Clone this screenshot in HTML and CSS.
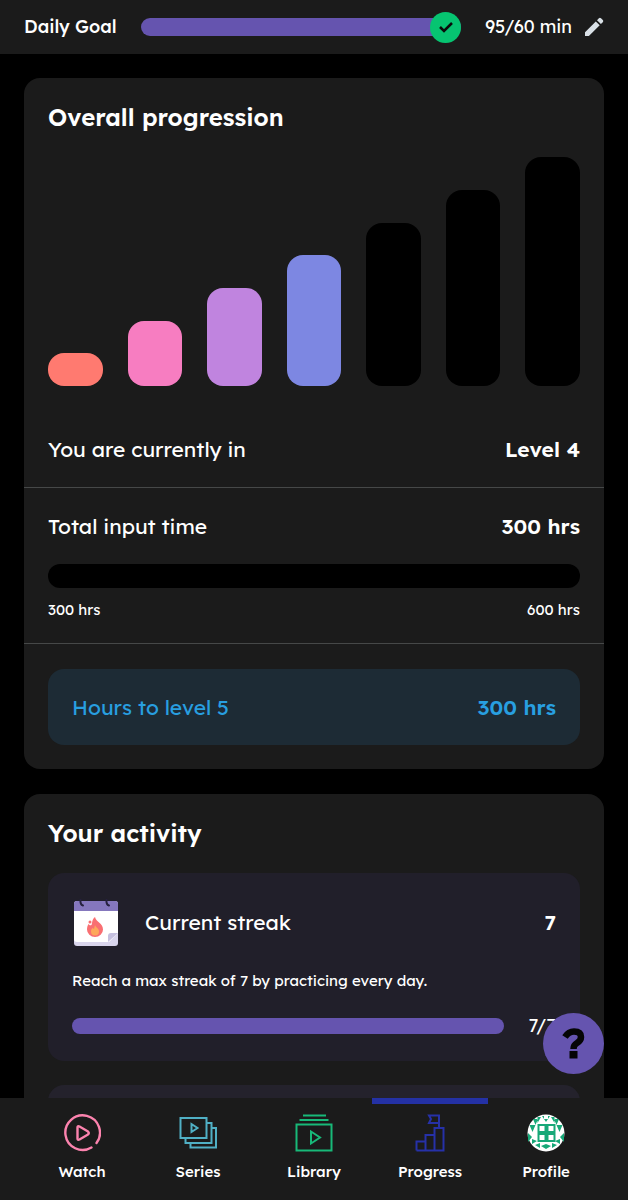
FILE: index.html
```html
<!DOCTYPE html>
<html lang="en">
<head>
    <meta charset="UTF-8">
    <meta name="viewport" content="width=device-width, initial-scale=1.0">
    <title>Progress</title>
    <link rel="stylesheet" href="styles.css">
</head>
<body>

<header class="daily-goal">
    <span class="goal-label" id="goal-label">Daily Goal</span>
    <div class="goal-track" role="progressbar" aria-labelledby="goal-label" aria-valuenow="95" aria-valuemax="60">
        <span class="goal-check">
            <svg width="16" height="12" viewBox="0 0 16 12" fill="none" stroke="#0b0b0b" stroke-width="2.500"><path d="M2 6l4 4L14 2"/></svg>
        </span>
    </div>
    <span class="goal-time">95/60 min</span>
    <button class="edit-goal" aria-label="Edit daily goal">
        <svg width="20" height="20" viewBox="0 0 20 20" fill="#d9e0e6"><path d="M1 15.200L11.800 4.400l3.900 3.900L4.900 19H1zM13 3.200l1.900-1.900a1.500 1.500 0 0 1 2.100 0l1.800 1.800a1.500 1.500 0 0 1 0 2.100L16.900 7.100z"/></svg>
    </button>
</header>

<main class="content">
    <section class="card">
        <h2>Overall progression</h2>
        <div class="levels">
            <div class="level level-1"></div>
            <div class="level level-2"></div>
            <div class="level level-3"></div>
            <div class="level level-4"></div>
            <div class="level level-5"></div>
            <div class="level level-6"></div>
            <div class="level level-7"></div>
        </div>
        <div class="row current-level">
            <span>You are currently in</span>
            <strong>Level 4</strong>
        </div>
        <div class="input-time">
            <div class="row">
                <span>Total input time</span>
                <strong>300 hrs</strong>
            </div>
            <div class="input-track"></div>
            <div class="range">
                <span>300 hrs</span>
                <span>600 hrs</span>
            </div>
        </div>
        <div class="row next-level">
            <span>Hours to level 5</span>
            <strong>300 hrs</strong>
        </div>
    </section>

    <section class="card">
        <h2>Your activity</h2>
        <article class="activity">
            <div class="activity-head">
                <svg width="48" height="50" viewBox="0 0 48 50">
                    <rect x="2" y="4" width="44" height="45" rx="3" fill="#d9d5ec"/>
                    <path d="M2 7h44v29l-9 9H5q-3 0-3-3z" fill="#fff"/>
                    <path d="M2 14V7q0-3 3-3h38q3 0 3 3v7z" fill="#8577bd"/>
                    <path d="M36 45v-6q0-3 3-3h7z" fill="#c5c0df"/>
                    <path d="M11 8.500q-3-1-2.500-5.500M37 8.500q-3-1-2.500-5.500" fill="none" stroke="#27213f" stroke-width="2" stroke-linecap="round"/>
                    <path d="M23 20c1 5 8 6 8 12.500a8 7.500 0 0 1-16 0c0-2 .5-4 1.500-5.500 1 1.500 2 1.500 3 1 1-2 0-5 3.500-8z" fill="#f96f72"/>
                    <circle cx="18" cy="25" r="1.500" fill="#f96f72"/>
                    <path d="M23 28c1 3 4 3 4 6.500a4 4 0 0 1-8 0c0-1.500.5-2.500 1.500-3.500l1.500 1z" fill="#fda85b"/>
                </svg>
                <h3>Current streak</h3>
                <strong>7</strong>
            </div>
            <p>Reach a max streak of 7 by practicing every day.</p>
            <div class="streak">
                <div class="streak-track"></div>
                <span>7/7</span>
            </div>
        </article>
        <article class="activity activity-next"></article>
    </section>
</main>

<button class="help" aria-label="Help">
    <svg width="24" height="32" viewBox="0 0 24 32"><path d="M3 9Q6.500 3.500 12 3.500q7 0 7 5.500 0 3.500-4 6-3.500 2-3.500 6" fill="none" stroke="#050505" stroke-width="6.500"/><path d="M7.500 23h8v7.500h-8z" fill="#050505"/></svg>
</button>

<nav class="tabs">
    <a href="#watch" class="tab">
        <svg width="38" height="38" viewBox="0 0 38 38" fill="none" stroke="#fc83ae" stroke-width="2.400" stroke-linecap="round" stroke-linejoin="round"><path d="M28.500 33.500A17.300 17.300 0 1 1 33.500 29"/><path d="M14.500 13.500v11q0 2 2 1l8.500-5q1.500-1.500 0-3l-8.500-5q-2-1-2 1z"/></svg>
        <span>Watch</span>
    </a>
    <a href="#series" class="tab">
        <svg width="38" height="38" viewBox="0 0 38 38" fill="none" stroke="#50b0c5" stroke-width="2"><path d="M1.500 4h26v20h-26zM27.500 9h5v20h-26v-5M32.500 14h4.500v19.500H11.500v-4.500M12.500 10v8l6-4z"/></svg>
        <span>Series</span>
    </a>
    <a href="#library" class="tab">
        <svg width="38" height="38" viewBox="0 0 38 38" fill="none" stroke="#18b979" stroke-width="2"><path d="M8 1.500h23M4.500 6h29M1.500 10.500h35v26h-35zM16 17.500v12l9-6z"/></svg>
        <span>Library</span>
    </a>
    <a href="#progress" class="tab active" aria-current="page">
        <svg width="38" height="38" viewBox="0 0 38 38" fill="none" stroke="#2631a8" stroke-width="2"><path d="M5.500 36.500V27.500h9v9M14.500 27.500V21h9v15.500M23.500 21v-7h9v22.500h-27M28 14V1.500H18L20 5l-2 4h10"/></svg>
        <span>Progress</span>
    </a>
    <a href="#profile" class="tab">
        <svg width="38" height="38" viewBox="0 0 38 38">
            <circle cx="19" cy="19" r="18.500" fill="#fff"/>
            <g fill="#17a878">
                <path d="M10.500 10h18v18h-18z"/>
                <path d="M10.500 3v6l3.500-6zM15 2l4 6 4-6h-2v3h-4V2zM24 3l3.500 6V3zM6 5h5l-2.500 6zM27 5h5l-2.500 6z"/>
                <path d="M2.500 11h6L5.500 18zM29.500 11h6l-3 7zM1 19l4 4-4 5zM37 19l-4 4 4 5zM5 25l5 2-5 3zM33 25l-5 2 5 3z"/>
                <path d="M8 31l5-2v5zM14 32l5-2v5zM24 32l-5-2v5zM30 31l-5-2v5z"/>
            </g>
            <path d="M12.500 12h5v5h-5zM21.500 12h5v5h-5zM12.500 21h5v5h-5zM21.500 21h5v5h-5z" fill="#fff"/>
        </svg>
        <span>Profile</span>
    </a>
</nav>

</body>
</html>
```
FILE: styles.css
```css
* {
    box-sizing: border-box;
}

body {
    display: flex;
    flex-direction: column;
    height: 100vh;
    margin: 0;
    background-color: #000;
    color: #fff;
    font-family: Lexend, Inter, sans-serif;
    font-size: 21px;
    line-height: 28px;
}

h2, h3, p {
    margin: 0;
}

strong {
    font-weight: 600;
}

button {
    padding: 0;
    border: none;
    background: none;
    cursor: pointer;
}

.daily-goal {
    display: flex;
    align-items: center;
    flex-shrink: 0;
    padding: 13px 24px;
    background-color: #1b1b1b;
    font-size: 18px;
}

.goal-label {
    font-weight: 500;
}

.goal-track {
    display: flex;
    align-items: center;
    justify-content: flex-end;
    flex: 1;
    height: 18px;
    margin: 0 24px;
    border-radius: 9px;
    background-color: #6554af;
}

.goal-check {
    display: flex;
    align-items: center;
    justify-content: center;
    width: 31px;
    height: 31px;
    border-radius: 50%;
    background-color: #06c471;
}

.edit-goal {
    display: flex;
    margin-left: 12px;
}

.content {
    flex: 1;
    min-height: 0;
    padding: 24px;
    overflow-y: auto;
    scrollbar-width: none;
}

.card {
    padding: 24px;
    margin-bottom: 25px;
    border-radius: 16px;
    background-color: #1b1b1b;
}

.card h2 {
    font-size: 24px;
    font-weight: 600;
    line-height: 31px;
}

.levels {
    display: grid;
    grid-template-columns: repeat(7, 1fr);
    align-items: end;
    gap: 25px;
    margin-top: 24px;
}

.level {
    border-radius: 16px;
    background-color: #000;
}

.level-1 { height: 33px; background-color: #ff7a70; }
.level-2 { height: 65px; background-color: #f77dc1; }
.level-3 { height: 98px; background-color: #c084df; }
.level-4 { height: 131px; background-color: #7d87e2; }
.level-5 { height: 163px; }
.level-6 { height: 196px; }
.level-7 { height: 229px; }

.row {
    display: flex;
    align-items: center;
    justify-content: space-between;
}

.current-level {
    margin: 25px -24px 0;
    padding: 24px;
    border-bottom: 1px solid #464848;
}

.input-time {
    margin: 0 -24px 25px;
    padding: 24px;
    border-bottom: 1px solid #464848;
}

.input-track {
    height: 24px;
    margin: 24px 0 12px;
    border-radius: 12px;
    background-color: #000;
}

.range {
    display: flex;
    justify-content: space-between;
    font-size: 15px;
    line-height: 19px;
}

.next-level {
    padding: 24px;
    border-radius: 16px;
    background-color: #1d2b35;
    color: #289fe0;
}

.activity {
    margin-top: 24px;
    padding: 24px;
    border-radius: 16px;
    background-color: #211f2a;
}

.activity-head {
    display: flex;
    align-items: center;
}

.activity-head h3 {
    flex: 1;
    margin-left: 25px;
    font-size: 21px;
    font-weight: 400;
}

.activity p {
    margin: 24px 0;
    font-size: 15px;
    line-height: 19px;
}

.streak {
    display: flex;
    align-items: center;
    font-size: 18px;
    line-height: 23px;
}

.streak-track {
    flex: 1;
    height: 16px;
    margin-right: 25px;
    border-radius: 8px;
    background-color: #6554af;
}

.activity-next {
    height: 188px;
    background-color: #24222c;
}

.help {
    position: fixed;
    right: 24px;
    bottom: 126px;
    display: flex;
    align-items: center;
    justify-content: center;
    width: 61px;
    height: 61px;
    border-radius: 50%;
    background-color: #6554af;
}

.tabs {
    display: flex;
    flex-shrink: 0;
    padding: 0 24px;
    background-color: #1b1b1b;
    font-size: 15px;
    line-height: 20px;
}

.tab {
    display: flex;
    flex: 1;
    flex-direction: column;
    align-items: center;
    gap: 10px;
    padding: 10px 0 18px;
    border-top: 6px solid transparent;
    color: #fff;
    font-weight: 500;
    text-decoration: none;
}

.tab.active {
    border-color: #2431a5;
}
```
